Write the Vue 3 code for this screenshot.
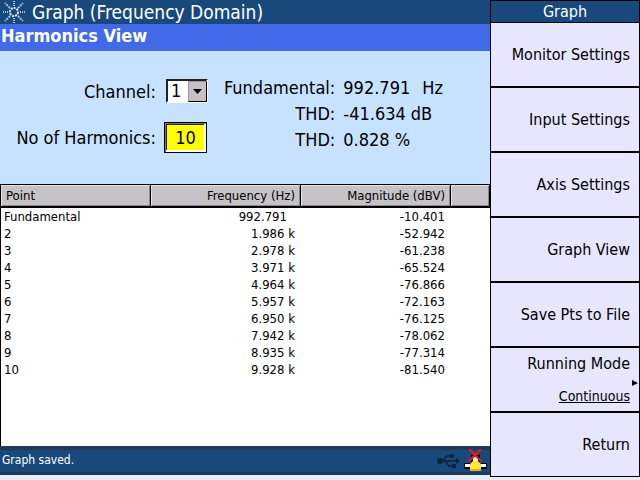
<script setup>
import { ref } from 'vue'

const channel = ref('1')
const harmonics = ref('10')

const readings = [
  { label: 'Fundamental:', value: '992.791', unit: 'Hz', wide: true },
  { label: 'THD:', value: '-41.634', unit: 'dB' },
  { label: 'THD:', value: '0.828', unit: '%' },
]

const rows = [
  { point: 'Fundamental', freq: '992.791', unit: '', mag: '-10.401' },
  { point: '2', freq: '1.986', unit: 'k', mag: '-52.942' },
  { point: '3', freq: '2.978', unit: 'k', mag: '-61.238' },
  { point: '4', freq: '3.971', unit: 'k', mag: '-65.524' },
  { point: '5', freq: '4.964', unit: 'k', mag: '-76.866' },
  { point: '6', freq: '5.957', unit: 'k', mag: '-72.163' },
  { point: '7', freq: '6.950', unit: 'k', mag: '-76.125' },
  { point: '8', freq: '7.942', unit: 'k', mag: '-78.062' },
  { point: '9', freq: '8.935', unit: 'k', mag: '-77.314' },
  { point: '10', freq: '9.928', unit: 'k', mag: '-81.540' },
]

const softkeys = [
  { label: 'Monitor Settings' },
  { label: 'Input Settings' },
  { label: 'Axis Settings' },
  { label: 'Graph View' },
  { label: 'Save Pts to File' },
  { label: 'Running Mode', value: 'Continuous' },
  { label: 'Return' },
]
</script>

<template>
  <div class="screen">
    <main class="main">
      <header class="title-bar">
        <svg class="logo" viewBox="0 0 24 24" aria-hidden="true">
          <circle cx="12" cy="12" r="4" fill="none" stroke="#e4f0ff" stroke-width="2" stroke-dasharray="2 1" />
          <g stroke="#a4c4e8" stroke-width="2" stroke-dasharray="1 1">
            <path d="M12 6V0M12 18v6M6 12H0M18 12h6" />
          </g>
          <g stroke="#a4c4e8" stroke-width="2" stroke-dasharray="2 1">
            <path d="M8 8L3 3M16 8l5-5M8 16l-5 5M16 16l5 5" />
          </g>
        </svg>
        <h1>Graph (Frequency Domain)</h1>
      </header>
      <h2 class="view-name">Harmonics View</h2>

      <section class="panel">
        <form class="fields" @submit.prevent>
          <label for="channel">Channel:</label>
          <div class="select-box">
            <select id="channel" v-model="channel">
              <option>1</option>
              <option>2</option>
            </select>
            <span class="drop" aria-hidden="true">
              <svg viewBox="0 0 9 5"><path d="M0 0h9L4.500 5z" fill="#000" /></svg>
            </span>
          </div>
          <label for="harmonics">No of Harmonics:</label>
          <input id="harmonics" v-model="harmonics" type="text" />
        </form>
        <dl class="readings">
          <template v-for="(r, i) in readings" :key="i">
            <dt>{{ r.label }}</dt>
            <dd :class="{ wide: r.wide }"><span>{{ r.value }}</span><span>{{ r.unit }}</span></dd>
          </template>
        </dl>
      </section>

      <section class="list">
        <table>
          <colgroup>
            <col class="c-point" />
            <col class="c-value" />
            <col class="c-value" />
            <col />
          </colgroup>
          <thead>
            <tr>
              <th class="left">Point</th>
              <th>Frequency (Hz)</th>
              <th>Magnitude (dBV)</th>
              <th></th>
            </tr>
          </thead>
          <tbody>
            <tr v-for="row in rows" :key="row.point">
              <td class="left">{{ row.point }}</td>
              <td :class="{ bare: !row.unit }">{{ row.freq }} {{ row.unit }}</td>
              <td>{{ row.mag }}</td>
              <td></td>
            </tr>
          </tbody>
        </table>
      </section>

      <footer class="status">
        <span class="message">Graph saved.</span>
        <svg class="usb" viewBox="0 0 24 16" role="img" aria-label="USB">
          <g fill="none" stroke="#0c2238" stroke-width="1.500">
            <path d="M4 8h17M6 8l5-5h4M9 8l4 5h4" />
          </g>
          <circle cx="4" cy="8" r="3" fill="#0c2238" />
          <circle cx="16" cy="3" r="2" fill="#0c2238" />
          <path d="M16 11h4v4h-4zM20 5l4 3-4 3z" fill="#0c2238" />
        </svg>
        <svg class="lan" viewBox="0 0 23 24" role="img" aria-label="Network disconnected">
          <path d="M0 14h23v6H0z" fill="#000" />
          <path d="M1 15h21v3H1z" fill="#fff" />
          <path d="M7 6h9v8H7z" fill="#000" />
          <path d="M9 8h5v4H9z" fill="#e8e8d8" />
          <path d="M9 12h5l3 3v5H6v-5z" fill="#ffe83c" />
          <path d="M6 20h11v2H6z" fill="#e0b020" />
          <path d="M5 0l12 12M17 0L5 12" stroke="#f01818" stroke-width="2" />
        </svg>
      </footer>
    </main>

    <nav class="softkeys" aria-label="Graph">
      <h2>Graph</h2>
      <button v-for="key in softkeys" :key="key.label" type="button">
        <span>{{ key.label }}</span>
        <span v-if="key.value" class="value">{{ key.value }}</span>
        <svg v-if="key.value" class="more" viewBox="0 0 6 6" aria-hidden="true">
          <path d="M0 0l6 3-6 3z" fill="#000" />
        </svg>
      </button>
    </nav>
  </div>
</template>

<style>
body {
  background: #e8eaf4;
}
</style>

<style scoped>
.screen {
  display: grid;
  grid-template-columns: minmax(0, 1fr) 150px;
  min-height: 100vh;
  box-sizing: border-box;
  padding-bottom: 3px;
  font-family: Tahoma, "DejaVu Sans Condensed", "Noto Sans", sans-serif;
  font-size: 18px;
  color: #000;
}
.screen * {
  box-sizing: border-box;
}
h1,
h2,
dl,
dd {
  margin: 0;
}
.main {
  display: flex;
  flex-direction: column;
  padding-bottom: 2px;
}
.title-bar {
  display: flex;
  align-items: center;
  gap: 6px;
  height: 24px;
  padding-left: 2px;
  background: #19497a;
  color: #fff;
}
.title-bar h1 {
  font-size: 19px;
  line-height: 24px;
  font-weight: 400;
}
.logo {
  width: 24px;
  height: 24px;
}
.view-name {
  height: 27px;
  padding-left: 1px;
  background: #4169e8;
  color: #fff;
  font-size: 18px;
  line-height: 24px;
  font-weight: 700;
}
.panel {
  display: flex;
  gap: 16px;
  height: 133px;
  padding-top: 24px;
  background: #c6e2ff;
}
.fields {
  display: grid;
  grid-template-columns: 156px 44px;
  grid-template-rows: 32px 32px;
  row-gap: 14px;
  column-gap: 8px;
  align-items: center;
  align-content: start;
}
.fields label {
  text-align: right;
}
.select-box {
  position: relative;
  justify-self: end;
  width: 42px;
  height: 24px;
}
.select-box select {
  appearance: none;
  width: 100%;
  height: 100%;
  padding: 0 0 0 3px;
  border: 2px solid;
  border-color: #222 #fff #fff #222;
  border-radius: 0;
  background: #fff;
  color: #000;
  font: inherit;
  line-height: 20px;
}
.drop {
  position: absolute;
  top: 2px;
  right: 1px;
  bottom: 1px;
  display: flex;
  align-items: center;
  justify-content: center;
  width: 19px;
  border: 1px solid;
  border-color: #999 #000 #000 #999;
  background: #c4c0c4;
  pointer-events: none;
}
.drop svg {
  width: 9px;
  height: 5px;
}
.fields input {
  width: 43px;
  height: 31px;
  padding: 0;
  border: 1px solid #000;
  border-radius: 0;
  background: #ff0;
  box-shadow: inset 1px 1px #777, inset -2px -2px #fff, inset 2px 2px #222;
  color: #000;
  font: inherit;
  text-align: center;
}
.readings {
  display: grid;
  grid-template-columns: auto auto;
  grid-auto-rows: 26px;
  column-gap: 8px;
  align-content: start;
  line-height: 26px;
}
.readings dt {
  text-align: right;
}
.readings dd {
  display: flex;
  gap: 5px;
}
.readings .wide {
  gap: 12px;
}
.list {
  flex: 1;
  border-left: 1px solid #000;
  background: #fff;
}
table {
  width: 100%;
  table-layout: fixed;
  border-collapse: separate;
  border-spacing: 0;
  font-size: 13px;
}
.c-point,
.c-value {
  width: 150px;
}
th {
  height: 24px;
  padding: 1px 5px 0;
  border: 1px solid #000;
  border-width: 1px 1px 2px 0;
  background: #c6c3c6;
  box-shadow: inset 1px 1px #e4e2e4, inset -1px -1px #8a888a;
  font-weight: 400;
  line-height: 18px;
  text-align: right;
}
td {
  height: 17px;
  padding: 0 6px 0 3px;
  line-height: 17px;
  text-align: right;
}
td.bare {
  padding-right: 14px;
}
.left {
  text-align: left;
}
.status {
  display: flex;
  align-items: center;
  gap: 4px;
  height: 29px;
  padding: 0 3px 0 2px;
  border: 1px solid #223a5a;
  border-width: 4px 0 3px;
  background: #19497a;
  color: #fff;
  font-size: 12px;
}
.message {
  flex: 1;
  padding-bottom: 2px;
}
.usb {
  width: 24px;
  height: 16px;
}
.lan {
  width: 23px;
  height: 24px;
}
.softkeys {
  display: flex;
  flex-direction: column;
  border: 1px solid #000;
  background: #000;
}
.softkeys h2 {
  height: 21px;
  margin-bottom: 1px;
  background: #19497a;
  color: #fff;
  font-size: 16px;
  line-height: 22px;
  font-weight: 400;
  text-align: center;
}
.softkeys button {
  position: relative;
  flex: 1;
  display: flex;
  flex-direction: column;
  align-items: flex-end;
  justify-content: center;
  gap: 12px;
  margin: 0;
  padding: 0 9px;
  border: 0;
  border-radius: 0;
  border-bottom: 2px solid #000;
  background: #e6e6ff;
  color: #000;
  font: inherit;
  font-size: 16px;
  line-height: 20px;
}
.softkeys button:last-child {
  border-bottom: 0;
}
.softkeys .value {
  font-size: 14px;
  text-decoration: underline;
}
.more {
  position: absolute;
  top: 50%;
  right: 1px;
  width: 6px;
  height: 6px;
}
</style>
